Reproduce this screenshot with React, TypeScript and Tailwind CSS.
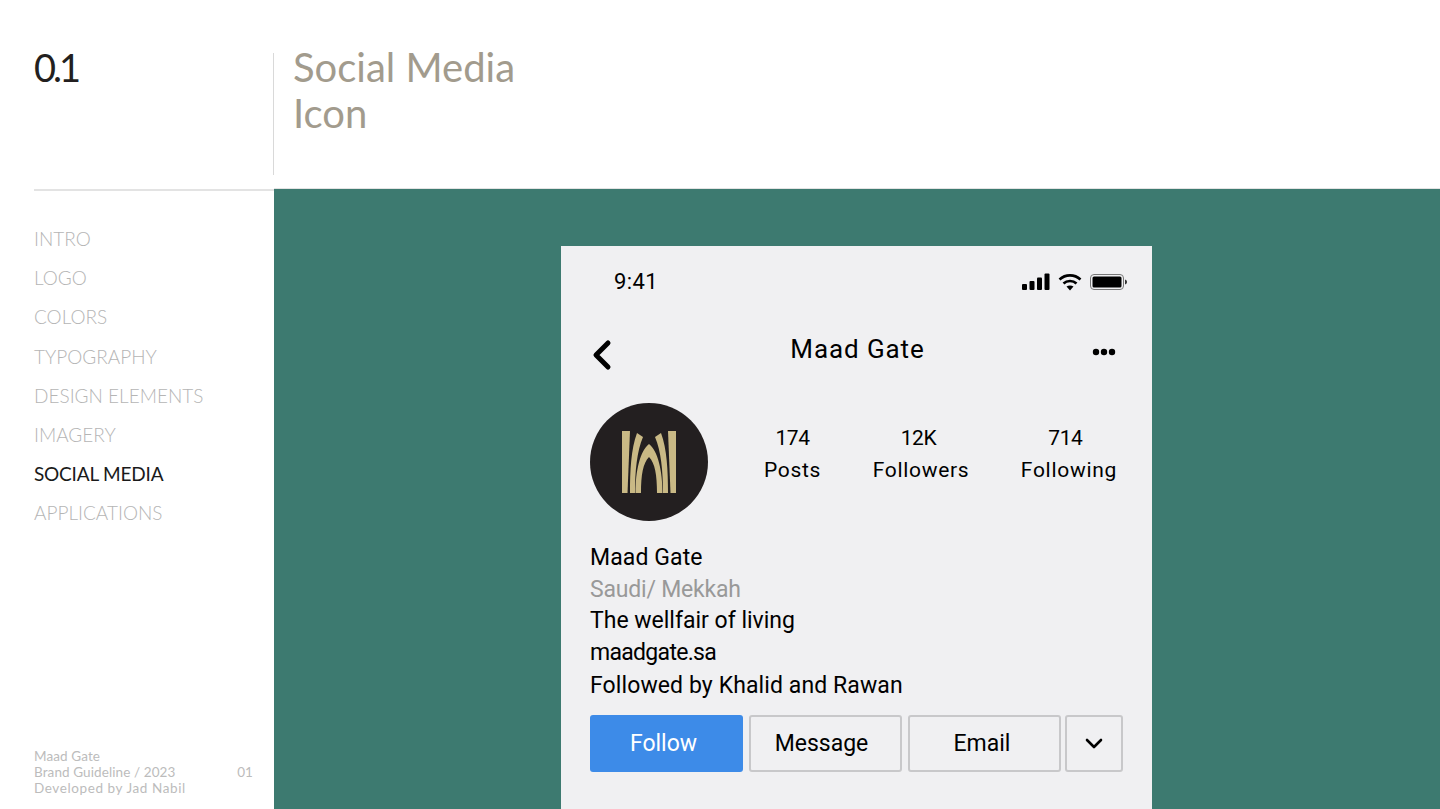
const nav = ["INTRO", "LOGO", "COLORS", "TYPOGRAPHY", "DESIGN ELEMENTS", "IMAGERY", "SOCIAL MEDIA", "APPLICATIONS"];

function Logo() {
  return (
    <svg viewBox="0 0 118 118" className="h-[118px] w-[118px]">
      <circle cx="59" cy="59" r="59" fill="#231f20" />
      <g fill="#c9b985">
        <path d="M32 28H40L37.500 90H32Z" />
        <path d="M47 30L53 34C47 48 45 68 45 90H40C40 68 41 46 47 30Z" />
        <path d="M59 41C68 48 72.500 68 72.500 90H67C67 72 65 60 59 54C53 60 51 72 51 90H45.500C45.500 68 50 48 59 41Z" />
        <path d="M71 30L65 34C71 48 73 68 73 90H78C78 68 77 46 71 30Z" />
        <path d="M86 28H78L80.500 90H86Z" />
      </g>
    </svg>
  );
}

function StatusIcons() {
  return (
    <div className="flex items-center gap-[8px]">
      <svg viewBox="0 0 28 18" className="h-[18px] w-[28px]" fill="#000">
        <rect x="0" y="11" width="5" height="6" rx="1" />
        <rect x="7.5" y="8" width="5" height="9" rx="1" />
        <rect x="15" y="4.5" width="5" height="12.5" rx="1" />
        <rect x="22.5" y="0.5" width="5" height="16.5" rx="1" />
      </svg>
      <svg viewBox="0 0 24 18" className="h-[18px] w-[24px]" fill="none" stroke="#000" strokeWidth="2.6">
        <path d="M1.5 6.5C7.5 1 16.5 1 22.5 6.5" />
        <path d="M5.5 10.5C9 7.2 15 7.2 18.5 10.5" />
        <path d="M12 17.5L8.5 13.5C10.5 12 13.5 12 15.5 13.5Z" fill="#000" stroke="none" />
      </svg>
      <svg viewBox="0 0 37 18" className="h-[18px] w-[37px]">
        <rect x="0.5" y="1.5" width="33" height="15" rx="3.5" fill="none" stroke="#777" />
        <rect x="2.5" y="3.5" width="29" height="11" rx="1.5" fill="#000" />
        <path d="M35 6.5C36.5 7 37 8 37 9S36.5 11 35 11.5Z" fill="#333" />
      </svg>
    </div>
  );
}

function Stat({ value, label, valueClass }: { value: string; label: string; valueClass: string }) {
  return (
    <div className="flex flex-col items-center">
      <span className={valueClass}>{value}</span>
      <span className="text-[21px] leading-[32px] tracking-[0.7px]">{label}</span>
    </div>
  );
}

export default function App() {
  return (
    <div className="flex h-[809px] w-[1440px] flex-col overflow-hidden bg-white font-['Lato',sans-serif]">
      <header className="flex h-[188px] shrink-0 pl-[34px]">
        <div className="w-[239px] pt-[42px] text-[38px] leading-[50px] tracking-[-3px] text-[#231f20]">0.1</div>
        <div className="mt-[53px] mb-[13px] border-l border-[#d9d9d9] pl-[19px] text-[40px] leading-[46px] text-[#a29b8d]">
          <div className="-mt-[9px]">Social Media</div>
          <div>Icon</div>
        </div>
      </header>

      <div className="flex min-h-0 flex-1">
        <aside className="flex w-[274px] shrink-0 flex-col justify-between pb-[13px] pl-[34px]">
          <div className="mt-[1px] border-t-2 border-[#e3e3e3] pt-[28px]">
            <nav className="flex flex-col">
              {nav.map((item) => (
                <div
                  key={item}
                  className={
                    item === "SOCIAL MEDIA"
                      ? "text-[19px] leading-[39.2px] font-normal tracking-[-0.2px] text-[#1a1a1a]"
                      : "text-[19px] leading-[39.2px] font-light text-[#b5b5b5]"
                  }
                >
                  {item}
                </div>
              ))}
            </nav>
          </div>
          <div className="flex items-center pr-[21px] text-[13.5px] leading-[16px] tracking-[0.1px] text-[#bcbcbc]">
            <div className="flex-1">
              <div>Maad Gate</div>
              <div>Brand Guideline / 2023</div>
              <div className="tracking-[0.6px]">Developed by Jad Nabil</div>
            </div>
            <div>01</div>
          </div>
        </aside>

        <main className="flex-1 overflow-hidden border-t border-[#e3e3e3] bg-[#3d7a70] pt-[57px] pl-[287px]">
          <div className="h-[600px] w-[591px] bg-[#f0f0f2] font-['Roboto',sans-serif] text-black">
            <div className="flex items-center justify-between pt-[21px] pr-[25px] pl-[53px]">
              <span className="text-[22px] leading-[30px] tracking-[0.4px]">9:41</span>
              <div className="-mt-[1px]">
                <StatusIcons />
              </div>
            </div>

            <div className="flex items-center justify-between pt-[30px] pr-[36px] pl-[31px]">
              <svg viewBox="0 0 20 32" className="mt-[12px] h-[32px] w-[20px]" fill="none" stroke="#000" strokeWidth="5" strokeLinecap="round" strokeLinejoin="round">
                <path d="M16 4L4 16L16 28" />
              </svg>
              <span className="pl-[11px] text-[26px] leading-[38px] tracking-[0.9px]">Maad Gate</span>
              <svg viewBox="0 0 24 8" className="mt-[5px] h-[8px] w-[24px]" fill="#000">
                <circle cx="4" cy="4" r="3.2" />
                <circle cx="12" cy="4" r="3.2" />
                <circle cx="20" cy="4" r="3.2" />
              </svg>
            </div>

            <div className="mt-[32px] flex items-start pl-[29px]">
              <Logo />
              <div className="flex flex-1 justify-between pt-[19px] pr-[35px] pl-[56px]">
                <Stat value="174" label="Posts" valueClass="text-[21px] leading-[32px] tracking-[-0.4px]" />
                <Stat value="12K" label="Followers" valueClass="pr-[5px] text-[21px] leading-[32px] tracking-[-0.4px]" />
                <Stat value="714" label="Following" valueClass="pr-[7px] text-[21px] leading-[32px] tracking-[-0.4px]" />
              </div>
            </div>

            <div className="mt-[21px] pl-[29px] text-[23px] leading-[32.3px]">
              <div className="tracking-[0.1px]">Maad Gate</div>
              <div className="-mb-[2px] tracking-[-0.2px] text-[#999]">Saudi/ Mekkah</div>
              <div>The wellfair of living</div>
              <div className="tracking-[-0.7px]">maadgate.sa</div>
              <div className="pt-[1px] tracking-[0.1px]">Followed by Khalid and Rawan</div>
            </div>

            <div className="mt-[13px] flex gap-[4px] pl-[29px] text-[23px]">
              <div className="flex gap-[6px]">
                <div className="flex h-[57px] w-[153px] items-center justify-center rounded-[3px] bg-[#3d8be8] pr-[6px] text-white">Follow</div>
                <div className="flex h-[57px] w-[153px] items-center justify-center rounded-[3px] border-2 border-[#c8c8ca] pr-[8px]">Message</div>
                <div className="flex h-[57px] w-[153px] items-center justify-center rounded-[3px] border-2 border-[#c8c8ca] pr-[5px]">Email</div>
              </div>
              <div className="flex h-[57px] w-[58px] items-center justify-center rounded-[3px] border-2 border-[#c8c8ca]">
                <svg viewBox="0 0 18 11" className="h-[11px] w-[18px]" fill="none" stroke="#000" strokeWidth="2.6" strokeLinecap="round" strokeLinejoin="round">
                  <path d="M2 2L9 9L16 2" />
                </svg>
              </div>
            </div>
          </div>
        </main>
      </div>
    </div>
  );
}
